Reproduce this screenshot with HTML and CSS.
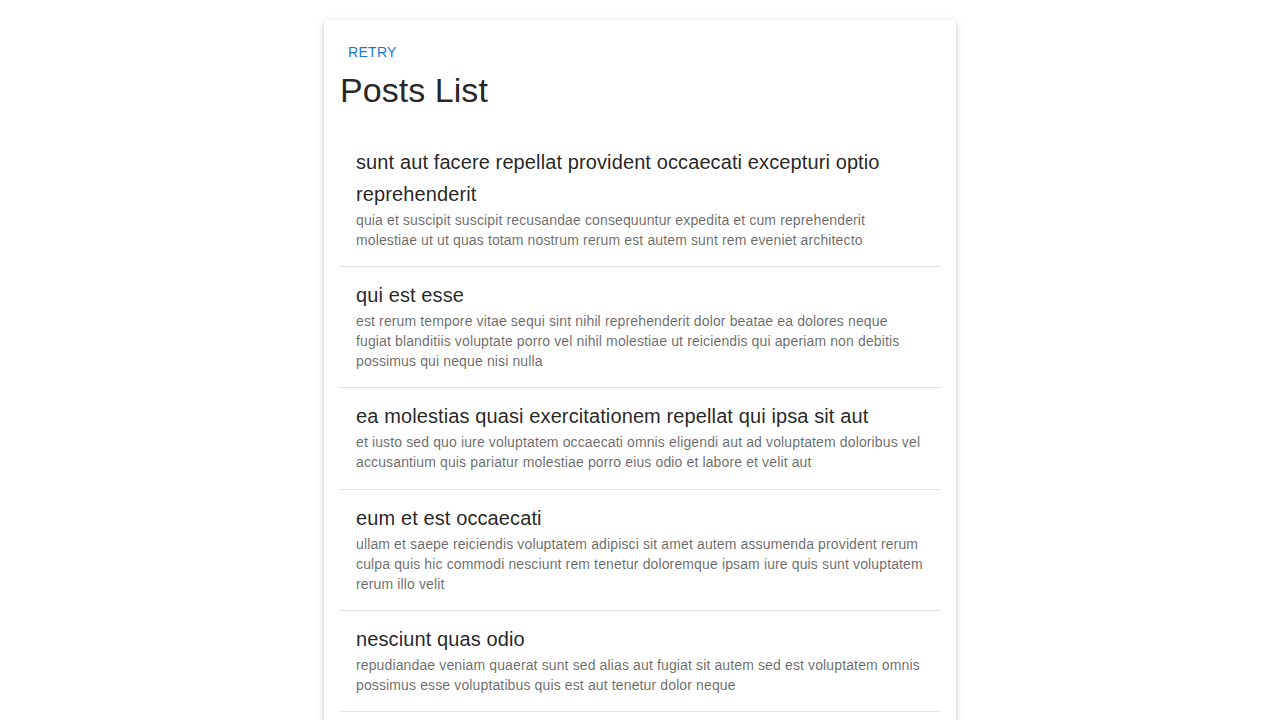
FILE: index.html
```html
<!DOCTYPE html>
<html lang="en">
<head>
<meta charset="utf-8">
<title>Posts List</title>
<link rel="stylesheet" href="styles.css">
</head>
<body>
<div class="card">
  <button class="btn-text" type="button">Retry</button>
  <h4 class="title">Posts List</h4>
  <ul class="list">
    <li class="item">
      <div class="item-text">
        <span class="primary">sunt aut facere repellat provident occaecati excepturi optio reprehenderit</span>
        <p class="secondary">quia et suscipit suscipit recusandae consequuntur expedita et cum reprehenderit molestiae ut ut quas totam nostrum rerum est autem sunt rem eveniet architecto</p>
      </div>
    </li>
    <li class="item">
      <div class="item-text">
        <span class="primary">qui est esse</span>
        <p class="secondary">est rerum tempore vitae sequi sint nihil reprehenderit dolor beatae ea dolores neque fugiat blanditiis voluptate porro vel nihil molestiae ut reiciendis qui aperiam non debitis possimus qui neque nisi nulla</p>
      </div>
    </li>
    <li class="item">
      <div class="item-text">
        <span class="primary">ea molestias quasi exercitationem repellat qui ipsa sit aut</span>
        <p class="secondary">et iusto sed quo iure voluptatem occaecati omnis eligendi aut ad voluptatem doloribus vel accusantium quis pariatur molestiae porro eius odio et labore et velit aut</p>
      </div>
    </li>
    <li class="item">
      <div class="item-text">
        <span class="primary">eum et est occaecati</span>
        <p class="secondary">ullam et saepe reiciendis voluptatem adipisci sit amet autem assumenda provident rerum culpa quis hic commodi nesciunt rem tenetur doloremque ipsam iure quis sunt voluptatem rerum illo velit</p>
      </div>
    </li>
    <li class="item">
      <div class="item-text">
        <span class="primary">nesciunt quas odio</span>
        <p class="secondary">repudiandae veniam quaerat sunt sed alias aut fugiat sit autem sed est voluptatem omnis possimus esse voluptatibus quis est aut tenetur dolor neque</p>
      </div>
    </li>
    <li class="item">
      <div class="item-text">
        <span class="primary">dolorem eum magni eos aperiam quia</span>
        <p class="secondary">ut aspernatur corporis harum nihil quis provident sequi mollitia nobis aliquid molestiae perspiciatis et ea nemo ab reprehenderit accusantium quas voluptate dolores velit et doloremque molestiae</p>
      </div>
    </li>
    <li class="item">
      <div class="item-text">
        <span class="primary">magnam facilis autem</span>
        <p class="secondary">dolore placeat quibusdam ea quo vitae magni quis enim qui quis quo nemo aut saepe quidem repellat excepturi ut quia sunt ut sequi eos ea sed quas</p>
      </div>
    </li>
  </ul>
</div>
</body>
</html>
```

FILE: styles.css
```css
html, body {
  margin: 0;
  padding: 0;
  background: #fff;
  font-family: "Liberation Sans", Arial, Helvetica, sans-serif;
  color: rgba(0, 0, 0, 0.87);
}

.card {
  width: 600px;
  margin: 20px auto 0;
  padding: 14px 16px 16px;
  background: #fff;
  border-radius: 4px;
  box-shadow: 0px 3px 3px -2px rgba(0,0,0,0.2), 0px 3px 4px 0px rgba(0,0,0,0.14), 0px 1px 8px 0px rgba(0,0,0,0.12);
}

.btn-text {
  display: inline-flex;
  align-items: center;
  justify-content: center;
  min-width: 64px;
  padding: 6px 8px;
  border: 0;
  border-radius: 4px;
  background: transparent;
  color: #1976d2;
  font-family: "Liberation Sans", Arial, sans-serif;
  font-size: 14px;
  font-weight: 500;
  line-height: 1.75;
  letter-spacing: 0.3px;
  text-transform: uppercase;
  cursor: pointer;
}

.title {
  margin: 0 0 17.9px;
  font-size: 34px;
  font-weight: 400;
  line-height: 38px;
  letter-spacing: 0.05px;
}

.list {
  list-style: none;
  margin: 0;
  padding: 8px 0;
}

.item {
  display: flex;
  align-items: center;
  padding: 8px 16px;
  border-bottom: 1px solid rgba(0, 0, 0, 0.12);
}

.item-text {
  flex: 1 1 auto;
  min-width: 0;
  margin: 4px 0 8px;
}

.primary {
  display: block;
  font-size: 20px;
  font-weight: 400;
  line-height: 1.6;
  letter-spacing: 0.11px;
}

.secondary {
  margin: 0;
  font-size: 14px;
  line-height: 1.43;
  letter-spacing: 0.13px;
  color: rgba(0, 0, 0, 0.6);
}
```
